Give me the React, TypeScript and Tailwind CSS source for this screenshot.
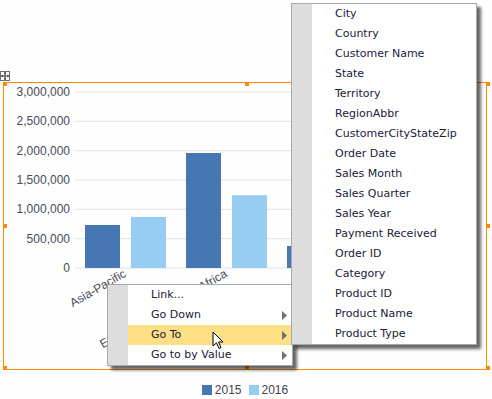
import * as React from "react";

const SERIES = [
  { name: "2015", color: "#4677b3" },
  { name: "2016", color: "#98cdf3" },
];

const GROUPS = [
  { label: "Asia-Pacific", values: [733000, 870000] },
  { label: "Europe, Middle East, Africa", values: [1960000, 1240000] },
  { label: "North America", values: [375000, 1450000] },
  { label: "South America", values: [820000, 640000] },
];

const TICKS = [0, 500000, 1000000, 1500000, 2000000, 2500000, 3000000];

const GO_MENU = [
  { label: "Link..." },
  { label: "Go Down", sub: true },
  { label: "Go To", sub: true, active: true },
  { label: "Go to by Value", sub: true },
];

const FIELDS = [
  "City",
  "Country",
  "Customer Name",
  "State",
  "Territory",
  "RegionAbbr",
  "CustomerCityStateZip",
  "Order Date",
  "Sales Month",
  "Sales Quarter",
  "Sales Year",
  "Payment Received",
  "Order ID",
  "Category",
  "Product ID",
  "Product Name",
  "Product Type",
];

// value -> page y
const yOf = (v: number) => 268 - (v / 500000) * 29.333;

const Chart = () => (
  <svg width={482} height={286} viewBox="4 83 482 286" className="block">
    {TICKS.map((t) => (
      <g key={t}>
        <line x1={75} x2={475} y1={yOf(t)} y2={yOf(t)} stroke="#e0e0e0" strokeWidth={1} />
        <text
          x={70}
          y={yOf(t) + 4}
          textAnchor="end"
          fontSize={12}
          fill="#4a4a5a"
          fontFamily="'Liberation Sans', Arial, sans-serif"
        >
          {t.toLocaleString("en-US")}
        </text>
      </g>
    ))}
    {GROUPS.map((g, i) => {
      const x0 = 85 + i * 101;
      return (
        <g key={g.label}>
          {g.values.map((v, j) => (
            <rect
              key={j}
              x={x0 + j * 46}
              y={yOf(v)}
              width={35}
              height={268 - yOf(v)}
              fill={SERIES[j].color}
            />
          ))}
          <text
            x={x0 + 42}
            y={276}
            textAnchor="end"
            fontSize={12}
            fill="#4a4a5a"
            fontFamily="'Liberation Sans', Arial, sans-serif"
            transform={`rotate(-30 ${x0 + 42} 276)`}
          >
            {g.label}
          </text>
        </g>
      );
    })}
  </svg>
);

const Arrow = () => (
  <svg width={5} height={9} viewBox="0 0 5 9" className="block">
    <path d="M0 0 L5 4.5 L0 9 Z" fill="#707070" />
  </svg>
);

const Menu = ({
  items,
  className,
}: {
  items: { label: string; sub?: boolean; active?: boolean }[];
  className: string;
}) => (
  <div
    className={`absolute flex w-[186px] border border-[#a9a9a9] bg-white shadow-[4px_4px_3px_rgba(0,0,0,0.6)] ${className}`}
  >
    <div className="w-[20px] shrink-0 bg-[#dcdddc]" />
    <div className="flex-1">
      {items.map((it) => (
        <div
          key={it.label}
          className={`flex h-[20px] items-center justify-between pl-[23px] pr-[5px] ${
            it.active ? "bg-[#fddf85]" : ""
          }`}
        >
          <span>{it.label}</span>
          {it.sub && <Arrow />}
        </div>
      ))}
    </div>
  </div>
);

const Handle = () => <div className="h-[4px] w-[4px] bg-[#ff8a00]" />;

const HandleRow = ({ mid = true }: { mid?: boolean }) => (
  <div className="flex justify-between">
    <Handle />
    {mid && <Handle />}
    <Handle />
  </div>
);

export default function App() {
  return (
    <div className="relative h-[399px] w-[492px] overflow-hidden bg-[#fdfefd] font-['Liberation_Sans',Arial,sans-serif]">
      <div className="pl-[3px] pt-[82px]">
        {/* selected chart */}
        <div className="relative h-[288px] w-[484px] border border-[#ff8a00]">
          <Chart />
          {/* selection handles */}
          <div className="absolute -left-px -top-px flex h-[288px] w-[487px] flex-col justify-between">
            <HandleRow />
            <HandleRow mid={false} />
            <HandleRow />
          </div>
        </div>

        {/* legend */}
        <div className="mt-[12px] flex w-[484px] justify-center gap-[7px] text-[12px] leading-[16px] text-[#444450]">
          {SERIES.map((s) => (
            <div key={s.name} className="flex items-center gap-[3px]">
              <span className="h-[10px] w-[10px]" style={{ backgroundColor: s.color }} />
              <span>{s.name}</span>
            </div>
          ))}
        </div>
      </div>

      {/* move icon */}
      <div className="absolute left-0 top-[71px] flex h-[10px] w-[10px] items-center justify-center border border-[#707070] bg-white">
        <svg width={8} height={8} viewBox="0 0 8 8" className="block">
          <path d="M4 0 V8 M0 4 H8" stroke="#333" strokeWidth={1} />
          <path d="M4 0 L2.5 1.5 H5.5 Z M4 8 L2.5 6.5 H5.5 Z M0 4 L1.5 2.5 V5.5 Z M8 4 L6.5 2.5 V5.5 Z" fill="#333" />
        </svg>
      </div>

      {/* context menus */}
      <div className="font-['DejaVu_Sans',Verdana,sans-serif] text-[11px] text-[#20203a]">
        <Menu items={GO_MENU} className="left-[107px] top-[284px] z-10" />
        <Menu items={FIELDS.map((f) => ({ label: f }))} className="left-[291px] top-[3px] z-20" />
      </div>

      {/* mouse pointer */}
      <svg
        width={13}
        height={20}
        viewBox="0 0 13 20"
        className="absolute left-[212px] top-[331px] z-30 block"
      >
        <path
          d="M1 1 L1 15 L4.5 11.8 L7 17.5 L9 16.6 L6.6 11 L11 11 Z"
          fill="#fff"
          stroke="#000"
          strokeWidth={1}
        />
      </svg>
    </div>
  );
}
